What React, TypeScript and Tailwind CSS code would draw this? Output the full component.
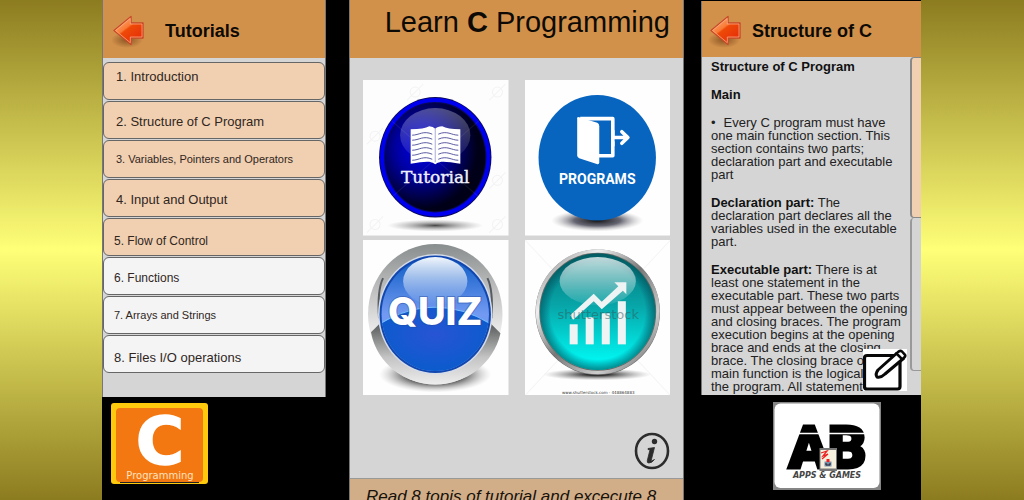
import React from "react";

const sans = "font-['Liberation_Sans',Arial,sans-serif]";

type Topic = { label: string; unlocked: boolean; text: string; pad: string };

const topics: Topic[] = [
  { label: "1. Introduction", unlocked: true, text: "text-[13px]", pad: "pl-3 pb-2" },
  { label: "2. Structure of C Program", unlocked: true, text: "text-[13px]", pad: "pl-3 pt-1" },
  { label: "3. Variables, Pointers and Operators", unlocked: true, text: "text-[11px]", pad: "pl-3" },
  { label: "4. Input and Output", unlocked: true, text: "text-[13px]", pad: "pl-3 pt-1" },
  { label: "5. Flow of Control", unlocked: true, text: "text-xs", pad: "pl-2.5 pt-2" },
  { label: "6. Functions", unlocked: false, text: "text-xs", pad: "pl-2.5 pt-1" },
  { label: "7. Arrays and Strings", unlocked: false, text: "text-[11px]", pad: "pl-2.5" },
  { label: "8. Files I/O operations", unlocked: false, text: "text-[13px]", pad: "pl-2.5 pt-2" },
];

function BackArrow({ id }: { id: string }) {
  return (
    <svg width="36" height="36" viewBox="0 0 36 36" aria-hidden="true">
      <defs>
        <linearGradient id={id} x1="0" y1="0" x2="0.8" y2="1">
          <stop offset="0" stopColor="#ffc090" />
          <stop offset="0.45" stopColor="#f97a35" />
          <stop offset="0.5" stopColor="#ee4a08" />
          <stop offset="1" stopColor="#e52a08" />
        </linearGradient>
        <radialGradient id={id + "s"}>
          <stop offset="0" stopColor="#6b3a10" stopOpacity="0.7" />
          <stop offset="1" stopColor="#6b3a10" stopOpacity="0" />
        </radialGradient>
      </defs>
      <ellipse cx="16" cy="27" rx="16" ry="8" fill={`url(#${id}s)`} />
      <path d="M3 17.5 L20 3.5 V10 H32 V25 H20 V31.500 Z" fill={`url(#${id})`} stroke="#c84a28" strokeWidth="1.4" strokeLinejoin="round" />
      <path d="M4.500 17.500 L19.300 5.300 V11 H31 V24 H19.300 V29.700 Z" fill="none" stroke="#ffb48c" strokeWidth="0.7" />
    </svg>
  );
}

function TutorialArt() {
  return (
    <svg className="block w-full" viewBox="0 0 145 155" aria-hidden="true">
      <defs>
        <radialGradient id="tBall" cx="0.36" cy="0.42" r="0.56">
          <stop offset="0" stopColor="#0000e8" />
          <stop offset="0.45" stopColor="#0000a0" />
          <stop offset="1" stopColor="#000018" />
        </radialGradient>
        <linearGradient id="tGloss" x1="0" y1="0" x2="0" y2="1">
          <stop offset="0" stopColor="#fff" stopOpacity="0.3" />
          <stop offset="1" stopColor="#fff" stopOpacity="0.07" />
        </linearGradient>
        <radialGradient id="shade">
          <stop offset="0" stopColor="#333" stopOpacity="0.9" />
          <stop offset="0.5" stopColor="#777" stopOpacity="0.5" />
          <stop offset="1" stopColor="#999" stopOpacity="0" />
        </radialGradient>
      </defs>
      <rect width="145" height="155" fill="#fdfdfd" />
      <g fill="none" stroke="#f3f3f3">
        {[[12, 56], [52, 12], [134, 12], [12, 144], [134, 100], [134, 144]].map(([x, y]) => (
          <g key={`${x}-${y}`}><circle cx={x} cy={y} r="5" /><path d={`M${x - 8} ${y + 8}l16-16`} /></g>
        ))}
      </g>
      <ellipse cx="72" cy="145" rx="48" ry="6" fill="url(#shade)" />
      <ellipse cx="72" cy="77" rx="56" ry="60" fill="#08085c" />
      <ellipse cx="72" cy="77" rx="53" ry="57" fill="none" stroke="#0000f0" strokeWidth="4" />
      <ellipse cx="72" cy="77" rx="50" ry="54" fill="url(#tBall)" />
      <path d="M25 120L122 35M22 35L125 125" stroke="#fff" strokeOpacity="0.07" />
      <ellipse cx="72" cy="55" rx="35" ry="27" fill="url(#tGloss)" />
      <path d="M47.500 49 Q61 49 66 46 Q70 46 72 48.500 Q74 46 79 46 Q84 49 97 49 V83.500 Q84 81 78 81.500 Q74 82 72 84 Q70 82 66 81.500 Q60 81 47.500 83.500 Z" fill="#fff" />
      <g stroke="#4a4a98" strokeWidth="0.9" fill="none">
        {[0, 5, 10, 15, 20, 25].map((d) => (
          <path key={d} d={`M49 ${55 + d}c7 0 11-5 20-1M75 ${54 + d}c9-4 13 1 20 1`} />
        ))}
      </g>
      <path d="M72 48.500V82" stroke="#8a8ac8" strokeWidth="0.7" />
      <text x="72" y="103" textAnchor="middle" fontFamily="DejaVu Serif, serif" fontSize="17" fill="#f1f1ff" stroke="#f1f1ff" strokeWidth="0.4">Tutorial</text>
    </svg>
  );
}

function ProgramsArt() {
  return (
    <svg className="block w-full" viewBox="0 0 145 155" aria-hidden="true">
      <defs>
        <radialGradient id="pShade">
          <stop offset="0" stopColor="#111" />
          <stop offset="0.5" stopColor="#334" stopOpacity="0.75" />
          <stop offset="1" stopColor="#aaa" stopOpacity="0" />
        </radialGradient>
      </defs>
      <rect width="145" height="155" fill="#fefefe" />
      <ellipse cx="72" cy="140" rx="46" ry="11" fill="url(#pShade)" />
      <ellipse cx="72" cy="77.500" rx="58.500" ry="62.500" fill="#0765c0" />
      <path d="M55 38.500H87.500V56M87.500 61V75.500H73" fill="none" stroke="#fff" strokeWidth="3.600" strokeLinejoin="round" />
      <path d="M87.500 50V66" stroke="#fff" strokeWidth="3.600" />
      <path d="M52 38 Q52 36.500 54 37 L72 42.500 Q74 43.300 74 46 V82 Q74 84.500 71.500 83.700 L54 78 Q52 77 52 75 Z" fill="#fff" />
      <path d="M88 57.300H101M96.500 51.500L102.500 57.300L96.500 63" fill="none" stroke="#fff" strokeWidth="3.600" strokeLinecap="round" strokeLinejoin="round" />
      <text x="72" y="104" textAnchor="middle" fontFamily="Roboto, sans-serif" fontWeight="700" fontSize="14" fill="#fff">PROGRAMS</text>
    </svg>
  );
}

function QuizArt() {
  return (
    <svg className="block w-full" viewBox="0 0 145 155" aria-hidden="true">
      <defs>
        <linearGradient id="qRing" x1="0" y1="0" x2="0" y2="1">
          <stop offset="0" stopColor="#888d8d" />
          <stop offset="0.3" stopColor="#bbb" />
          <stop offset="0.6" stopColor="#e8e8e8" />
        </linearGradient>
        <linearGradient id="qLow" x1="0" y1="0" x2="0" y2="1">
          <stop offset="0" stopColor="#595c5c" />
          <stop offset="0.55" stopColor="#c4c4c4" />
          <stop offset="1" stopColor="#ededed" />
        </linearGradient>
        <linearGradient id="qBall" x1="0" y1="0" x2="0" y2="1">
          <stop offset="0" stopColor="#0b5cc5" />
          <stop offset="0.5" stopColor="#739af2" />
        </linearGradient>
        <radialGradient id="qDeep" cx="0.5" cy="0.4" r="0.65">
          <stop offset="0" stopColor="#2854d4" />
          <stop offset="1" stopColor="#045dcb" />
        </radialGradient>
        <linearGradient id="qGloss" x1="0" y1="0" x2="0" y2="1">
          <stop offset="0" stopColor="#fff" stopOpacity="0.95" />
          <stop offset="1" stopColor="#fff" stopOpacity="0" />
        </linearGradient>
        <radialGradient id="qShade">
          <stop offset="0.5" stopColor="#555" />
          <stop offset="1" stopColor="#bbb" stopOpacity="0" />
        </radialGradient>
        <clipPath id="qClip"><ellipse cx="72" cy="74" rx="53.500" ry="56.500" /></clipPath>
      </defs>
      <rect width="145" height="155" fill="#fefefe" />
      <ellipse cx="72" cy="134" rx="56" ry="18" fill="url(#qShade)" />
      <ellipse cx="72" cy="74" rx="67" ry="70" fill="url(#qRing)" />
      <path d="M16 84 L8 92 C14 124 42 144 72 144 C102 144 130 124 137 93 L128 84 Z" fill="url(#qLow)" />
      <path d="M20 38Q14 50 16 78M124 38Q130 50 128 78" fill="none" stroke="#555b60" strokeWidth="2" />
      <ellipse cx="72" cy="74" rx="57" ry="60" fill="#d5dce8" />
      <ellipse cx="72" cy="74" rx="55.500" ry="58.500" fill="#1147ae" />
      <ellipse cx="72" cy="74" rx="53.500" ry="56.500" fill="url(#qBall)" />
      <path clipPath="url(#qClip)" d="M16 84Q72 50 128 84V135H16Z" fill="url(#qDeep)" stroke="#75bdff" strokeWidth="1" />
      <ellipse cx="72" cy="41" rx="32" ry="24" fill="url(#qGloss)" />
      <text x="72" y="85" textAnchor="middle" fontFamily="Inter, sans-serif" fontWeight="800" fontSize="38" fill="#fff" stroke="#254899" strokeOpacity="0.45" strokeWidth="2" paintOrder="stroke">QUIZ</text>
    </svg>
  );
}

function ProgressArt() {
  return (
    <svg className="block w-full" viewBox="0 0 145 155" aria-hidden="true">
      <defs>
        <linearGradient id="gBall" x1="0" y1="0" x2="0" y2="1">
          <stop offset="0" stopColor="#047477" />
          <stop offset="0.45" stopColor="#07a6a9" />
          <stop offset="0.9" stopColor="#00f2ee" />
        </linearGradient>
        <linearGradient id="gRing" x1="0" y1="0" x2="1" y2="1">
          <stop offset="0" stopColor="#777" />
          <stop offset="0.25" stopColor="#eee" />
          <stop offset="0.5" stopColor="#777" />
          <stop offset="0.75" stopColor="#ccc" />
          <stop offset="1" stopColor="#555" />
        </linearGradient>
        <linearGradient id="gGloss" x1="0" y1="0" x2="0" y2="1">
          <stop offset="0" stopColor="#fff" stopOpacity="0.75" />
          <stop offset="1" stopColor="#fff" stopOpacity="0.08" />
        </linearGradient>
        <radialGradient id="gEdge">
          <stop offset="0.82" stopColor="#003355" stopOpacity="0" />
          <stop offset="1" stopColor="#034b50" stopOpacity="0.6" />
        </radialGradient>
        <radialGradient id="gShade">
          <stop offset="0.2" stopColor="#333" />
          <stop offset="1" stopColor="#999" stopOpacity="0" />
        </radialGradient>
      </defs>
      <rect width="145" height="155" fill="#fefefe" />
      <path d="M0 0L145 155M145 0L0 155" stroke="#f5f5f5" />
      <ellipse cx="72" cy="134" rx="54" ry="6" fill="url(#gShade)" />
      <ellipse cx="72.500" cy="72" rx="62" ry="62.500" fill="#666" />
      <ellipse cx="72.500" cy="71.500" rx="60" ry="60.500" fill="none" stroke="url(#gRing)" strokeWidth="3.500" />
      <ellipse cx="72.500" cy="71.500" rx="57.500" ry="58" fill="url(#gBall)" />
      <ellipse cx="72.500" cy="71.500" rx="57.500" ry="58" fill="url(#gEdge)" />
      <ellipse cx="72.500" cy="41" rx="38" ry="24" fill="url(#gGloss)" />
      <g fill="#eef3f3">
        <rect x="44.500" y="84" width="8" height="20" />
        <rect x="60.500" y="77" width="8" height="27" />
        <rect x="76.500" y="73" width="8" height="31" />
        <rect x="92.500" y="61" width="8" height="43" />
        <path d="M45 75L68.500 53.500L76.500 61.500L93 46L89 42H101V54L97.500 50.500L76.500 69L68.500 61L48 79.500Z" />
      </g>
      <text x="73" y="79" textAnchor="middle" fontFamily="DejaVu Sans, sans-serif" fontSize="13" fill="#31585b" opacity="0.5">shutterstock</text>
      <text x="73" y="153" textAnchor="middle" fontFamily="DejaVu Sans, sans-serif" fontSize="4" fill="#333">www.shutterstock.com - 448864883</text>
    </svg>
  );
}

function PanelHeader({ title, id, label, box }: { title: string; id: string; label: string; box: string }) {
  return (
    <header className={`flex items-center bg-[#d2914b] pt-1 ${box}`}>
      <button type="button" aria-label={label} className="shrink-0">
        <BackArrow id={id} />
      </button>
      <h2 className="whitespace-nowrap text-[18px] font-bold text-[#0d0a06]">{title}</h2>
    </header>
  );
}

function TutorialsPanel() {
  return (
    <section className="min-w-0">
      <div className="border-l border-r border-[#777] bg-[#d5d5d5]">
        <PanelHeader title="Tutorials" id="arrowL" label="Back to home" box="h-[58px] gap-[18px] pl-2" />
        <ul className="flex flex-col gap-px pb-6 pt-1">
          {topics.map((t) => (
            <li key={t.label}>
              <button
                type="button"
                className={`flex h-[38px] w-full items-center whitespace-nowrap rounded-md border border-[#666] text-left text-[#30261e] ${t.pad} ${t.text} ${t.unlocked ? "bg-[#f0d0b1]" : "bg-[#f4f4f4]"}`}
              >
                {t.label}
              </button>
            </li>
          ))}
        </ul>
      </div>
      <svg className="ml-2 mt-[5px] block" width="99" height="83" viewBox="0 0 99 83" role="img" aria-label="C Programming">
        <rect x="1" y="1" width="97" height="81" rx="3" fill="#ffc90e" />
        <rect x="6" y="6" width="87" height="74" rx="4" fill="#f47812" />
        <path d="M10 80.500H89" stroke="#222" />
        <text x="50" y="62" textAnchor="middle" fontFamily="DejaVu Sans, sans-serif" fontWeight="700" fontSize="66" fill="#fff" stroke="#fff" strokeWidth="1.5">C</text>
        <text x="50" y="77" textAnchor="middle" fontFamily="DejaVu Sans, sans-serif" fontSize="10" fill="#ffe2bd">Programming</text>
      </svg>
    </section>
  );
}

function HomePanel() {
  return (
    <main className="flex min-w-0 flex-col overflow-hidden border-l border-r border-[#777] bg-[#d5d5d5]">
      <header className="h-[58px] shrink-0 bg-[#d2914b] pr-[13px] pt-1.5">
        <h1 className="whitespace-nowrap text-right text-[29px] leading-8 text-[#0d0a06]">
          Learn <b>C</b> Programming
        </h1>
      </header>
      <div className="grid grid-cols-2 gap-x-4 gap-y-1 px-[13px] pt-[22px]">
        <button type="button" aria-label="Tutorial"><TutorialArt /></button>
        <button type="button" aria-label="Programs"><ProgramsArt /></button>
        <button type="button" aria-label="Quiz"><QuizArt /></button>
        <button type="button" aria-label="Progress"><ProgressArt /></button>
      </div>
      <div className="mt-auto flex shrink-0 justify-end pb-2 pr-[13px]">
        <button type="button" aria-label="About">
          <svg className="block" width="36" height="38" viewBox="0 0 36 38" aria-hidden="true">
            <ellipse cx="18" cy="19" rx="16" ry="17" fill="none" stroke="#2c2c2c" strokeWidth="2.600" />
            <circle cx="20.500" cy="9.500" r="2.700" fill="#2c2c2c" />
            <path d="M14 16.500L20.500 15.500L17.300 28Q17 29.700 20.500 27.500Q18 31 14.800 31Q12.800 31 13.300 28.500L15.800 18.500Q16 17.500 14 17.500Z" fill="#2c2c2c" stroke="#2c2c2c" strokeWidth="0.8" />
          </svg>
        </button>
      </div>
      <footer className="h-[22px] shrink-0 overflow-hidden border-t border-[#999] bg-[#d1ae88] pl-4 pt-2">
        <p className="whitespace-nowrap text-[17px] italic leading-5 text-[#17120c]">Read 8 topis of tutorial and excecute 8</p>
      </footer>
    </main>
  );
}

function StructurePanel() {
  return (
    <section className="min-w-0">
      <div className="relative mt-px border-l border-[#777] bg-[#d5d5d5]">
        <PanelHeader title="Structure of C" id="arrowR" label="Back to tutorials" box="h-14 gap-2 pl-1.5" />
        <div className="flex h-[338px] overflow-hidden">
          <article className="min-w-0 flex-1 space-y-[15px] whitespace-nowrap pl-[9px] pt-[3px] text-[13px] leading-[13px] text-[#222]">
            <h3 className="font-bold text-[#111]">Structure of C Program</h3>
            <h4 className="font-bold text-[#111]">Main</h4>
            <p>
              <span className="mr-2">•</span>Every C program must have<br />
              one main function section. This<br />
              section contains two parts;<br />
              declaration part and executable<br />
              part
            </p>
            <p>
              <b className="text-[#111]">Declaration part:</b> The<br />
              declaration part declares all the<br />
              variables used in the executable<br />
              part.
            </p>
            <p>
              <b className="text-[#111]">Executable part:</b> There is at<br />
              least one statement in the<br />
              executable part. These two parts<br />
              must appear between the opening<br />
              and closing braces. The program<br />
              execution begins at the opening<br />
              brace and ends at the closing<br />
              brace. The closing brace of the<br />
              main function is the logical end of<br />
              the program. All statements in the
            </p>
          </article>
          <div className="flex w-[11px] shrink-0 flex-col" aria-hidden="true">
            <div className="h-[161px] rounded-l-[4px] border-b border-l-2 border-t border-[#888] bg-[#f0d0b1]" />
            <div className="h-[153px] rounded-l-[4px] border-b border-l-2 border-[#999]" />
          </div>
        </div>
        <button type="button" aria-label="Take notes" className="absolute bottom-1 right-3.5 bg-white">
          <svg className="block" width="44" height="42" viewBox="0 0 44 42" aria-hidden="true">
            <rect x="1.500" y="6.500" width="35.500" height="33.500" rx="2.500" fill="#fff" stroke="#080808" strokeWidth="3.200" />
            <path d="M34 4L15 21Q12 25 14 28Q18 29 22 25L41 9" fill="#fff" stroke="#080808" strokeWidth="3" strokeLinejoin="round" />
            <path d="M33.500 4.500L36 2.300Q37.500 1.300 39 2.500L42 5.800Q42.700 7 41.500 8.300L39.300 10.300Z" fill="#fff" stroke="#080808" strokeWidth="2.600" strokeLinejoin="round" />
          </svg>
        </button>
      </div>
      <svg className="ml-[72px] mt-[7px] block" width="108" height="88" viewBox="0 0 108 88" role="img" aria-label="AB Apps and Games">
        <rect width="108" height="88" fill="#858585" />
        <rect x="1.500" y="1.500" width="105" height="84.500" rx="6" fill="#fff" />
        <g fontFamily="Roboto, sans-serif" fontWeight="900" fontSize="60" fill="#000" stroke="#000" strokeWidth="3" textAnchor="middle">
          <text x="36" y="66">A</text>
          <text x="74" y="66">B</text>
        </g>
        <path d="M14 31.500H96" stroke="#fff" strokeWidth="1.500" />
        <rect x="46.500" y="46" width="17.500" height="23" fill="#777" />
        <rect x="47.500" y="48" width="15.500" height="18.500" fill="#f4f0dd" />
        <path d="M48 51L54 49L50 54L55 52L49 57" fill="none" stroke="#e22" strokeWidth="1.300" />
        <rect x="51.500" y="59.500" width="7" height="5" fill="#7890a8" />
        <rect x="53.500" y="57" width="3" height="3" fill="#e22" />
        <path d="M53 61V63H57V61" fill="none" stroke="#223" />
        <text x="54" y="76" textAnchor="middle" fontFamily="DejaVu Sans, sans-serif" fontStyle="italic" fontWeight="700" fontSize="8" fill="#444">APPS &amp; GAMES</text>
      </svg>
    </section>
  );
}

export default function App() {
  return (
    <div className={`h-screen overflow-hidden bg-[linear-gradient(to_bottom,#8c7c20,#ffff78_50%,#8c7c20)] pl-[102px] pr-[103px] ${sans}`}>
      <div className="grid h-full grid-cols-[224fr_23fr_335fr_17fr_220fr] bg-black">
        <TutorialsPanel />
        <div />
        <HomePanel />
        <div />
        <StructurePanel />
      </div>
    </div>
  );
}
